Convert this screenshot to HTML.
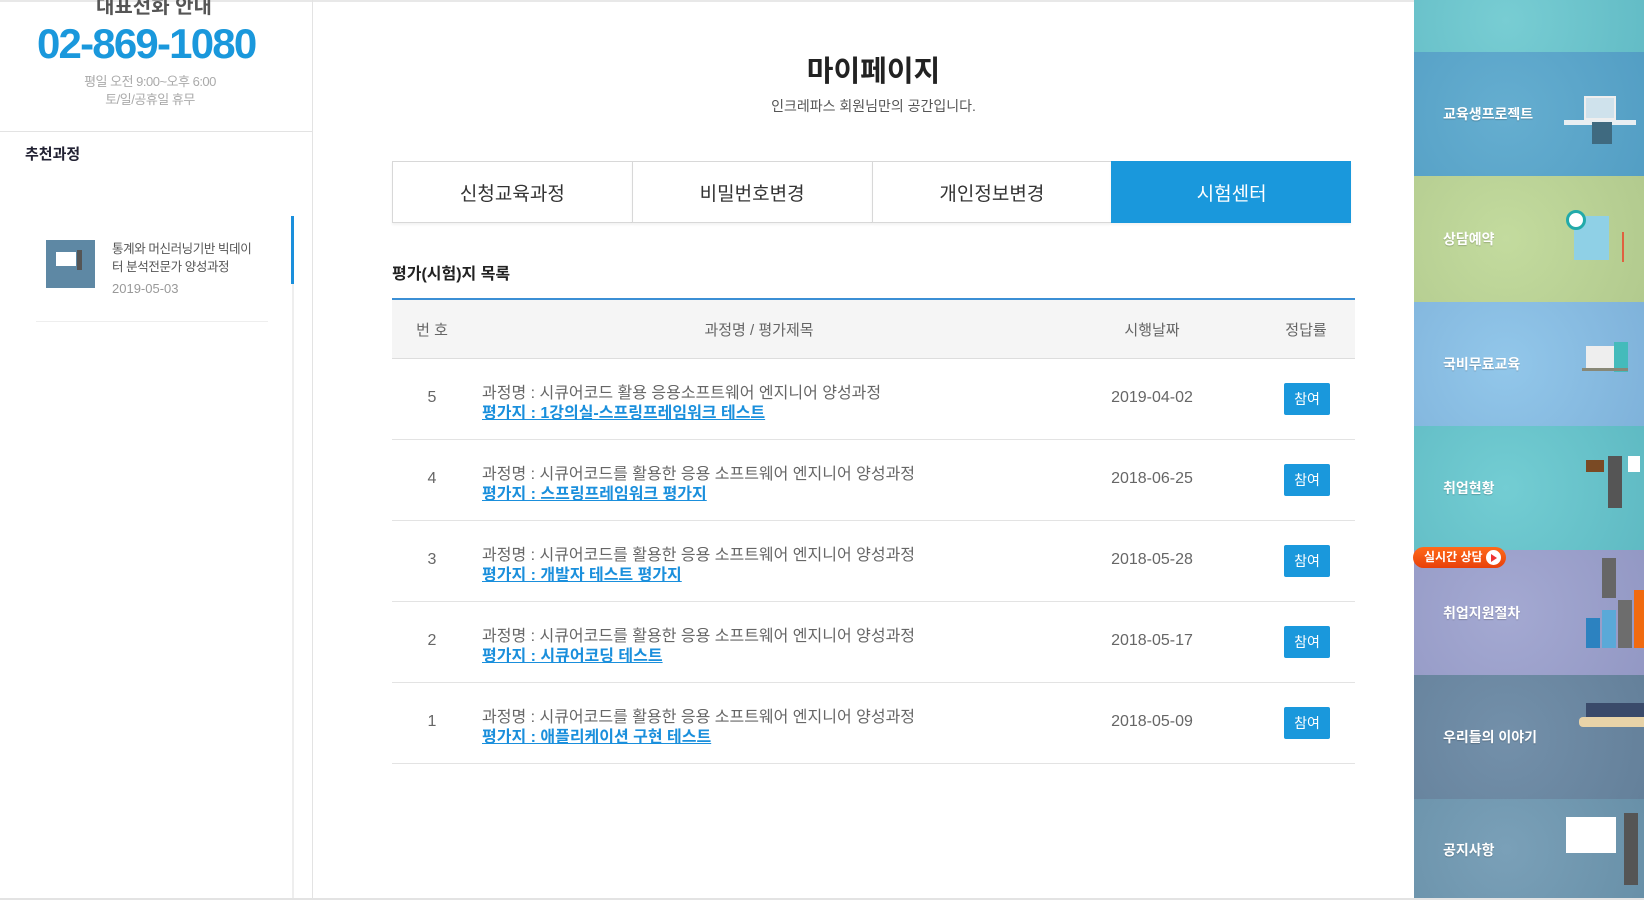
<!DOCTYPE html>
<html><head><meta charset="utf-8"><style>
*{margin:0;padding:0;box-sizing:border-box}
body{width:1644px;height:900px;overflow:hidden;background:#fff;font-family:"Liberation Sans","Noto Sans CJK KR",sans-serif;position:relative;color:#333}
.abs{position:absolute}
.left{left:0;top:0;width:313px;height:900px;border-right:1px solid #e3e3e3}
.topline{left:0;top:0;width:1644px;height:2px;background:#e8e8e8}
.tabs{left:392px;top:161px;width:959px;height:62px;display:flex}
.tab{flex:1;border:1px solid #d8d8d8;border-right:none;display:flex;align-items:center;justify-content:center;font-size:19px;color:#333;box-shadow:0 2px 2px rgba(0,0,0,.05)}
.tab:last-child{background:#1a98dc;color:#fff;border-color:#1a98dc}
.th{top:298px;left:392px;width:963px;height:61px;background:#f5f5f5;border-top:2px solid #3b8fd5;border-bottom:1px solid #ddd;font-size:15px;color:#666}
.row{left:392px;width:963px;height:81px;border-bottom:1px solid #e3e3e3;font-size:16px;color:#666}
.c{position:absolute;transform:translateX(-50%);white-space:nowrap}
.btn{position:absolute;left:892px;top:24px;width:46px;height:32px;background:#1a98dc;color:#fff;font-size:14px;display:flex;align-items:center;justify-content:center;border-radius:2px}
.t1{position:absolute;left:90px;top:20px;color:#666;font-size:16px;white-space:nowrap}
.t2{position:absolute;left:90px;top:40px;color:#1a8fdc;font-size:16px;font-weight:bold;white-space:nowrap;text-decoration:underline}
.p{position:absolute;left:1414px;width:230px;color:#fff;font-size:14px;font-weight:bold}
.p span{position:absolute;left:29px;top:50%;transform:translateY(-50%);text-shadow:0 1px 1px rgba(0,0,0,.2)}
</style></head><body>
<div class="abs topline"></div>
<div class="abs left"></div>
<div class="abs" style="left:96px;top:-10px;font-size:20px;font-weight:bold;color:#555">대표전화 안내</div>
<div class="abs" style="left:37px;top:20px;font-size:42px;font-weight:bold;color:#1a98dc;letter-spacing:-1.8px">02-869-1080</div>
<div class="abs" style="left:0;width:300px;top:73px;text-align:center;font-size:13px;color:#aaa;line-height:18px;letter-spacing:-.5px">평일 오전 9:00~오후 6:00<br>토/일/공휴일 휴무</div>
<div class="abs" style="left:0;top:131px;width:312px;height:1px;background:#e3e3e3"></div>
<div class="abs" style="left:25px;top:143px;font-size:15px;font-weight:bold;color:#223">추천과정</div>
<div class="abs" style="left:292px;top:216px;width:2px;height:684px;background:#eee"></div>
<div class="abs" style="left:291px;top:216px;width:3px;height:68px;background:#1a8fdc"></div>
<div class="abs" style="left:46px;top:240px;width:49px;height:48px;background:#5e88a4"><div style="position:absolute;left:10px;top:12px;width:20px;height:14px;background:#fff"></div><div style="position:absolute;left:31px;top:10px;width:5px;height:20px;background:#555"></div></div>
<div class="abs" style="left:112px;top:240px;font-size:12.5px;color:#555;line-height:18px;letter-spacing:-.4px">통계와 머신러닝기반 빅데이<br>터 분석전문가 양성과정</div>
<div class="abs" style="left:112px;top:281px;font-size:13px;color:#999">2019-05-03</div>
<div class="abs" style="left:36px;top:321px;width:232px;height:1px;background:#eee"></div>

<div class="abs" style="left:323px;width:1101px;top:48px;text-align:center;font-size:29px;font-weight:bold;color:#222">마이페이지</div>
<div class="abs" style="left:323px;width:1101px;top:96px;text-align:center;font-size:14px;color:#555">인크레파스 회원님만의 공간입니다.</div>
<div class="abs tabs"><div class="tab">신청교육과정</div><div class="tab">비밀번호변경</div><div class="tab">개인정보변경</div><div class="tab">시험센터</div></div>
<div class="abs" style="left:392px;top:260px;font-size:16px;font-weight:bold;color:#222">평가(시험)지 목록</div>
<div class="abs th"><span class="c" style="left:40px;top:19px">번 호</span><span class="c" style="left:367px;top:19px">과정명 / 평가제목</span><span class="c" style="left:760px;top:19px">시행날짜</span><span class="c" style="left:914px;top:19px">정답률</span></div>

<div class="abs row" style="top:359px"><span class="c" style="left:40px;top:30px">5</span><div class="t1">과정명 : 시큐어코드 활용 응용소프트웨어 엔지니어 양성과정</div><div class="t2">평가지 : 1강의실-스프링프레임워크 테스트</div><span class="c" style="left:760px;top:30px">2019-04-02</span><div class="btn">참여</div></div>
<div class="abs row" style="top:440px"><span class="c" style="left:40px;top:30px">4</span><div class="t1">과정명 : 시큐어코드를 활용한 응용 소프트웨어 엔지니어 양성과정</div><div class="t2">평가지 : 스프링프레임워크 평가지</div><span class="c" style="left:760px;top:30px">2018-06-25</span><div class="btn">참여</div></div>
<div class="abs row" style="top:521px"><span class="c" style="left:40px;top:30px">3</span><div class="t1">과정명 : 시큐어코드를 활용한 응용 소프트웨어 엔지니어 양성과정</div><div class="t2">평가지 : 개발자 테스트 평가지</div><span class="c" style="left:760px;top:30px">2018-05-28</span><div class="btn">참여</div></div>
<div class="abs row" style="top:602px"><span class="c" style="left:40px;top:30px">2</span><div class="t1">과정명 : 시큐어코드를 활용한 응용 소프트웨어 엔지니어 양성과정</div><div class="t2">평가지 : 시큐어코딩 테스트</div><span class="c" style="left:760px;top:30px">2018-05-17</span><div class="btn">참여</div></div>
<div class="abs row" style="top:683px"><span class="c" style="left:40px;top:30px">1</span><div class="t1">과정명 : 시큐어코드를 활용한 응용 소프트웨어 엔지니어 양성과정</div><div class="t2">평가지 : 애플리케이션 구현 테스트</div><span class="c" style="left:760px;top:30px">2018-05-09</span><div class="btn">참여</div></div>

<div class="p" style="top:0;height:52px;background:radial-gradient(circle at 40% 40%,#78cdd3,#63bcc6)"></div>
<div class="p" style="top:52px;height:124px;background:radial-gradient(circle at 40% 50%,#65aed0,#539ec4)"><span>교육생프로젝트</span><div style="position:absolute;left:150px;top:68px;width:72px;height:5px;background:#e8eef2"></div><div style="position:absolute;left:170px;top:44px;width:32px;height:24px;background:#cfe2ec;border:2px solid #eee"></div><div style="position:absolute;left:178px;top:70px;width:20px;height:22px;background:#3f6a80"></div></div>
<div class="p" style="top:176px;height:126px;background:radial-gradient(circle at 40% 50%,#c3db9e,#b2ca8e)"><span>상담예약</span><div style="position:absolute;left:160px;top:40px;width:35px;height:44px;background:#8fd0e6"></div><div style="position:absolute;left:152px;top:34px;width:20px;height:20px;border-radius:50%;background:#fff;border:3px solid #2aa"></div><div style="position:absolute;left:208px;top:56px;width:2px;height:30px;background:#e06040"></div></div>
<div class="p" style="top:302px;height:124px;background:radial-gradient(circle at 40% 50%,#92c7ea,#7fb2da)"><span>국비무료교육</span><div style="position:absolute;left:172px;top:44px;width:28px;height:22px;background:#eee"></div><div style="position:absolute;left:200px;top:40px;width:14px;height:30px;background:#4bb"></div><div style="position:absolute;left:168px;top:66px;width:46px;height:3px;background:#887"></div></div>
<div class="p" style="top:426px;height:124px;background:radial-gradient(circle at 40% 50%,#73cdd3,#5fbac3)"><span>취업현황</span><div style="position:absolute;left:194px;top:30px;width:14px;height:52px;background:#555"></div><div style="position:absolute;left:172px;top:34px;width:18px;height:12px;background:#7a4a24"></div><div style="position:absolute;left:214px;top:30px;width:12px;height:16px;background:#fff"></div></div>
<div class="p" style="top:550px;height:125px;background:radial-gradient(circle at 40% 50%,#a4a9d2,#9398c4)"><span>취업지원절차</span><div style="position:absolute;left:172px;top:68px;width:14px;height:30px;background:#2c82c0"></div><div style="position:absolute;left:188px;top:60px;width:14px;height:38px;background:#5aa9d8"></div><div style="position:absolute;left:204px;top:50px;width:14px;height:48px;background:#6d6d6d"></div><div style="position:absolute;left:220px;top:40px;width:12px;height:58px;background:#f06a10"></div><div style="position:absolute;left:188px;top:8px;width:14px;height:40px;background:#666"></div></div>
<div class="p" style="top:675px;height:124px;background:radial-gradient(circle at 40% 50%,#7390aa,#64809a)"><span>우리들의 이야기</span><div style="position:absolute;left:165px;top:42px;width:72px;height:10px;background:#e8d3a8;border-radius:4px"></div><div style="position:absolute;left:172px;top:28px;width:60px;height:14px;background:#3a4a6a"></div></div>
<div class="p" style="top:799px;height:101px;background:radial-gradient(circle at 40% 50%,#7aa0b8,#6890a8)"><span>공지사항</span><div style="position:absolute;left:152px;top:18px;width:50px;height:36px;background:#fff"></div><div style="position:absolute;left:210px;top:14px;width:14px;height:72px;background:#555"></div></div>
<div class="abs" style="left:1413px;top:547px;width:93px;height:21px;border-radius:11px;background:linear-gradient(#ff6a1a,#e8400a);color:#fff;font-size:12px;font-weight:bold;padding-left:11px;line-height:21px">실시간 상담<span style="position:absolute;right:5px;top:3px;width:15px;height:15px;border-radius:50%;background:#fff"></span><span style="position:absolute;right:9px;top:7px;border-left:6px solid #e33;border-top:4px solid transparent;border-bottom:4px solid transparent"></span></div>
<div class="abs" style="left:0;top:898px;width:1644px;height:2px;background:#e3e3e3"></div>
</body></html>
